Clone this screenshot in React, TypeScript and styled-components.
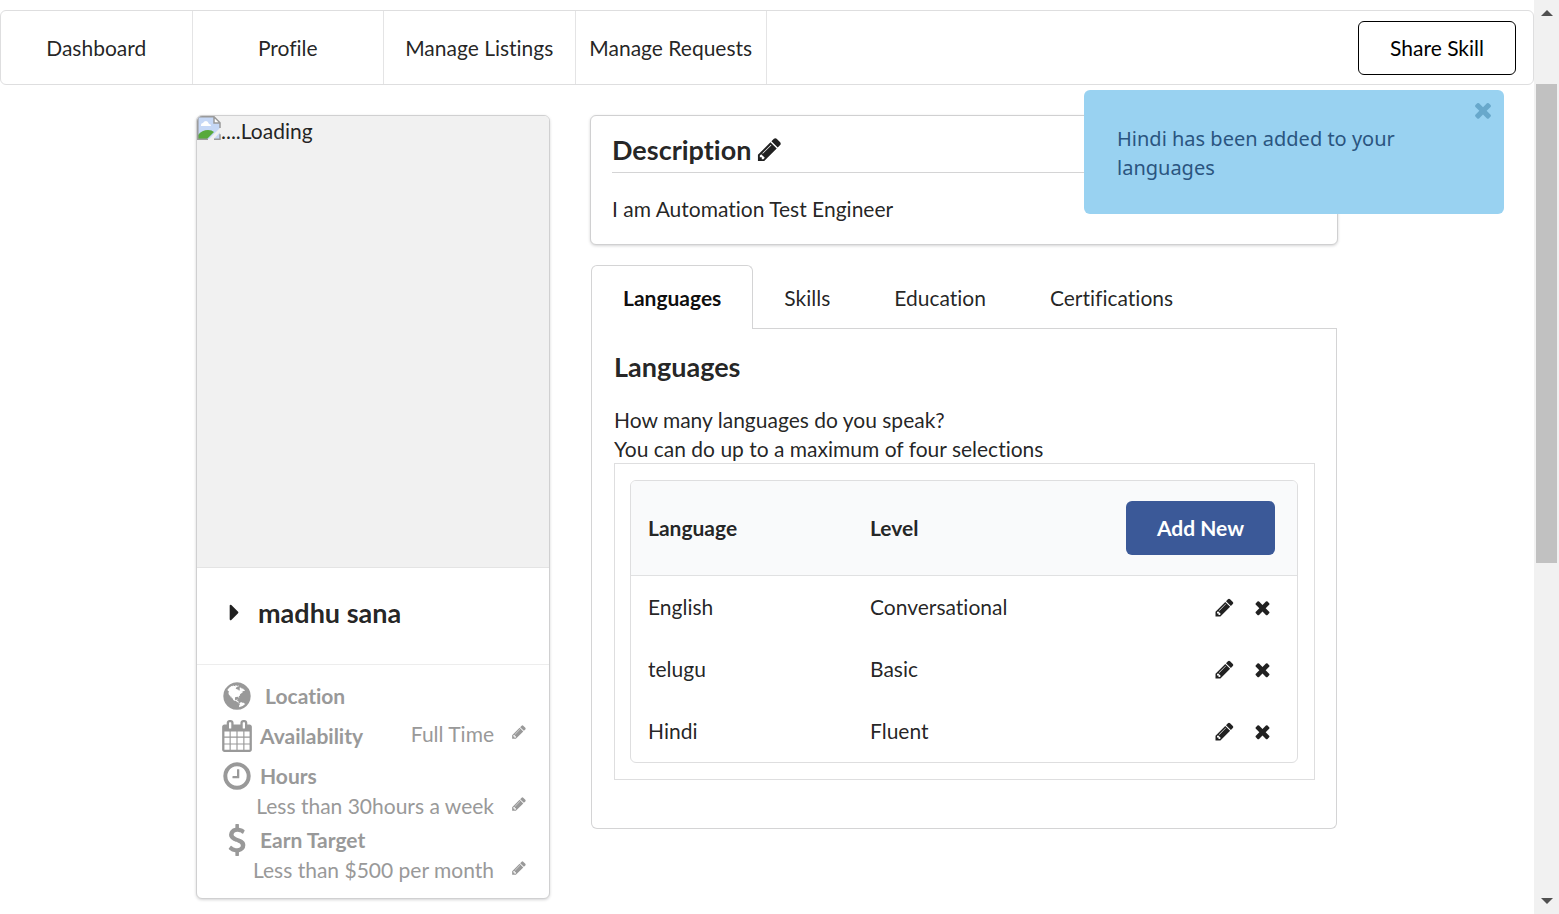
import React from 'react';
import styled, { createGlobalStyle } from 'styled-components';

const GlobalStyle = createGlobalStyle`
  *, *::before, *::after { box-sizing: border-box; }
  body { margin: 0; background: #fff; }
  body, button {
    font-family: Lato, 'Liberation Sans', sans-serif;
    font-size: 21px;
    line-height: 29px;
    font-variant-ligatures: none;
    color: rgba(0, 0, 0, 0.87);
  }
  h3, p, ul { margin: 0; padding: 0; }
`;

const ICONS = {
  pencil:
    'M491 1536l91-91-235-235-91 91v107h128v128h107zm523-928q0-22-22-22-10 0-17 7l-542 542q-7 7-7 17 0 22 22 22 10 0 17-7l542-542q7-7 7-17zm-54-192l416 416-832 832h-416v-416zm683 96q0 53-37 90l-166 166-416-416 166-165q36-38 90-38 53 0 91 38l235 234q37 39 37 91z',
  remove:
    'M1490 1322q0 40-28 68l-136 136q-28 28-68 28t-68-28l-294-294-294 294q-28 28-68 28t-68-28l-136-136q-28-28-28-68t28-68l294-294-294-294q-28-28-28-68t28-68l136-136q28-28 68-28t68 28l294 294 294-294q28-28 68-28t68 28l136 136q28 28 28 68t-28 68l-294 294 294 294q28 28 28 68z',
  caret:
    'M1152 896q0 26-19 45l-448 448q-19 19-45 19t-45-19-19-45v-896q0-26 19-45t45-19 45 19l448 448q19 19 19 45z',
  calendar:
    'M192 1664h288v-288h-288v288zm352 0h320v-288h-320v288zm-352-352h288v-320h-288v320zm352 0h320v-320h-320v320zm-352-384h288v-288h-288v288zm736 736h320v-288h-320v288zm-384-736h320v-288h-320v288zm768 736h288v-288h-288v288zm-384-352h320v-320h-320v320zm-352-864v-288q0-13-9.5-22.5t-22.5-9.5h-64q-13 0-22.5 9.5t-9.5 22.5v288q0 13 9.5 22.5t22.5 9.5h64q13 0 22.5-9.5t9.5-22.5zm736 864h288v-320h-288v320zm-384-384h320v-288h-320v288zm384 0h288v-288h-288v288zm32-480v-288q0-13-9.5-22.5t-22.5-9.5h-64q-13 0-22.5 9.5t-9.5 22.5v288q0 13 9.5 22.5t22.5 9.5h64q13 0 22.5-9.5t9.5-22.5zm384-64v1280q0 52-38 90t-90 38h-1408q-52 0-90-38t-38-90v-1280q0-52 38-90t90-38h128v-96q0-66 47-113t113-47h64q66 0 113 47t47 113v96h384v-96q0-66 47-113t113-47h64q66 0 113 47t47 113v96h128q52 0 90 38t38 90z',
  clock:
    'M1024 544v448q0 14-9 23t-23 9h-320q-14 0-23-9t-9-23v-64q0-14 9-23t23-9h224v-352q0-14 9-23t23-9h64q14 0 23 9t9 23zm416 352q0-148-73-273t-198-198-273-73-273 73-198 198-73 273 73 273 198 198 273 73 273-73 198-198 73-273zm224 0q0 209-103 385.5t-279.5 279.5-385.5 103-385.5-103-279.5-279.5-103-385.5 103-385.5 279.5-279.5 385.5-103 385.5 103 279.5 279.5 103 385.5z',
  dollar:
    'M1362 1185q0 153-99.5 263.5t-258.5 136.5v175q0 14-9 23t-23 9h-135q-13 0-22.5-9.5t-9.5-22.5v-175q-66-9-127.5-31t-101.5-44.5-74-48-46.5-37.5-17.5-18q-17-21-2-41l103-135q7-10 23-12 15-2 24 9l2 2q113 99 243 125 37 8 74 8 81 0 142.5-43t61.5-122q0-28-15-53t-33.5-42-58.5-37.5-66-32-80-32.5q-39-16-61.5-25t-61.5-26.5-62.5-31-56.5-35.5-53.5-42.5-43.5-49-35.5-58-21-66.5-8.5-78q0-138 98-242t255-134v-180q0-13 9.5-22.5t22.5-9.5h135q14 0 23 9t9 23v176q57 6 110.5 23t87 33.5 63.5 37.5 39 29 15 14q17 18 5 38l-81 146q-8 15-23 16-14 3-27-7-3-3-14.5-12t-39-26.5-58.5-32-74.5-26-85.5-11.5q-95 0-155 43t-60 111q0 26 8.5 48t29.5 41.5 39.5 33 56 31 60.5 27 70 27.5q53 20 81 31.5t76 35 75.5 42.5 62 50 53 63.5 31.5 76.5 13 94z',
  globe:
    'M896 128q209 0 385.5 103t279.5 279.5 103 385.5-103 385.5-279.5 279.5-385.5 103-385.5-103-279.5-279.5-103-385.5 103-385.5 279.5-279.5 385.5-103zm274 521q-2 1-9.5 9.5t-13.5 9.5q2 0 4.5-5t5-11 3.5-7q6-7 22-15 14-6 52-12 34-8 51 11-2-2 9.5-13t14.5-12q3-2 15-4.5t15-7.5l2-22q-12 1-17.5-7t-6.5-21q0 2-6 8 0-7-4.5-8t-11.5 1-9 1q-10-3-15-7.5t-8-16.5-4-15q-2-5-9.5-11t-9.5-10q-1-2-2.5-5.5t-3-6.5-4-5.5-5.5-2.5-7 5-7.5 10-4.5 5q-3-2-6-1.5t-4.5 1-4.5 3-5 3.5q-3 2-8.5 3t-8.5 2q15-5-1-11-10-4-16-3 9-4 7.5-12t-8.5-14h5q-1-4-8.5-8.5t-17.5-8.5-13-6q-8-5-34-9.5t-33-.5q-5 6-4.5 10.5t4 14 3.5 12.5q1 6-5.5 13t-6.5 12q0 7 14 15.5t10 21.5q-3 8-16 16t-16 12q-5 8-1.5 18.5t10.5 16.5q2 2 1.5 4t-3.5 4.5-5.5 4-6.5 3.5l-3 2q-11 5-20.5-6t-13.5-26q-7-25-16-30-23-8-29 1-5-13-41-26-25-9-58-4 6-1 0-15-7-15-19-12 3-6 4-17.5t1-13.5q3-13 12-23 1-1 7-8.5t9.5-13.5.5-6q35 4 50-11 5-5 11.5-17t10.5-17q9-6 14-5.5t14.5 5.5 14.5 5q14 1 15.5-11t-7.5-20q12 1 3-17-4-7-8-9-12-4-27 5-8 4 2 8-1-1-9.5 10.5t-16.5 17.5-16-5q-1-1-5.5-13.5t-9.5-13.5q-8 0-16 15 3-8-11-15t-24-8q19-12-8-27-7-4-20.5-5t-19.5 4q-5 7-5.5 11.5t5 8 10.5 5.5 11.5 4 8.5 3q14 10 8 14-2 1-8.5 3.5t-11.5 4.5-6 4q-3 4 0 14t-2 14q-5-5-9-17.5t-7-16.5q7 9-25 6l-10-1q-4 0-16 2t-20.5 1-13.5-8q-4-8 0-20 1-4 4-2-4-3-11-9.5t-10-8.5q-46 15-94 41 6 1 12-1 5-2 13-6.5t10-5.5q34-14 42-7l5-5q14 16 20 25-7-4-30-1-20 6-22 12 7 12 5 18-4-3-11.5-10t-14.5-11-15-5q-16 0-22 1-146 80-235 222 7 7 12 8 4 1 5 9t2.5 11 11.5-3q9 8 3 19 1-1 44 27 19 17 21 21 3 11-10 18-1-2-9-9t-9-4q-3 5 .5 18.5t10.5 12.5q-7 0-9.5 16t-2.5 35.5-1 23.5l2 1q-3 12 5.5 34.5t21.5 19.5q-13 3 20 43 6 8 8 9 3 2 12 7.5t15 10 10 10.5q4 5 10 22.5t14 23.5q-2 6 9.5 20t10.5 23q-1 0-2.5 1t-2.5 1q3 7 15.5 14t15.5 13q1 3 2 10t3 11 8 2q2-20-24-62-15-25-17-29-3-5-5.5-15.5t-4.5-14.5q2 0 6 1.5t8.5 3.5 7.5 4 2 3q-3 7 2 17.5t12 18.5 17 19 12 13q6 6 14 19.5t0 13.5q9 0 20 10t17 20q5 8 8 26t5 24q2 7 8.5 13.5t12.5 9.5l16 8 13 7q5 2 18.5 10.5t21.5 11.5q10 4 16 4t14.5-2.5 13.5-3.5q15-2 29 15t21 21q36 19 55 11-2 1 .5 7.5t8 15.5 9 14.5 5.5 8.5q5 6 18 15t18 15q6-4 7-9-3 8 7 20t18 10q14-3 14-32-31 15-49-18 0-1-2.5-5.5t-4-8.5-2.5-8.5 0-7.5 5-3q9 0 10-3.5t-2-12.5-4-13q-1-8-11-20t-12-15q-5 9-16 8t-16-9q0 1-1.5 5.5t-1.5 6.5q-13 0-15-1 1-3 2.5-17.5t3.5-22.5q1-4 5.5-12t7.5-14.5 4-12.5-4.5-9.5-17.5-2.5q-19 1-26 20-1 3-3 10.5t-5 11.5-9 7q-7 3-24 2t-24-5q-13-8-22.5-29t-9.5-37q0-10 2.5-26.5t3-25-5.5-24.5q3-2 9-9.5t10-10.5q2-1 4.5-1.5t4.5 0 4-1.5 3-6q-1-1-4-3-3-3-4-3 7 3 28.5-1.5t27.5 1.5q15 11 22-2 0-1-2.5-9.5t-.5-13.5q5 27 29 9 3 3 15.5 5t17.5 5q3 2 7 5.5t5.5 4.5 5-.5 8.5-6.5q10 14 12 24 11 40 19 44 7 3 11 2t4.5-9.5 0-14-1.5-12.5l-1-8v-18l-1-8q-15-3-18.5-12t1.5-18.5 15-18.5q1-1 8-3.5t15.5-6.5 12.5-8q21-19 15-35 7 0 11-9-1 0-5-3t-7.5-5-4.5-2q9-5 2-16 5-3 7.5-11t7.5-10q9 12 21 2 7-8 1-16 5-7 20.5-10.5t18.5-9.5q7 2 8-2t1-12 3-12q4-5 15-9t13-5l17-11q3-4 0-4 18 2 31-11 10-11-6-20 3-6-3-9.5t-15-5.5q3-1 11.5-.5t10.5-1.5q15-10-7-16-17-5-43 12zm-163 877q206-36 351-189-3-3-12.5-4.5t-12.5-3.5q-18-7-24-8 1-7-2.5-13t-8-9-12.5-8-11-7q-2-2-7-6t-7-5.5-7.5-4.5-8.5-2-10 1l-3 1q-3 1-5.5 2.5t-5.5 3-4 3 0 2.5q-21-17-36-22-5-1-11-5.5t-10.5-7-10-1.5-11.5 7q-5 5-6 15t-2 13q-7-5 0-17.5t2-18.5q-3-6-10.5-4.5t-12 4.5-11.5 8.5-9 6.5-8.5 5.5-8.5 7.5q-3 4-6 12t-5 11q-2-4-11.5-6.5t-9.5-5.5q2 10 4 35t5 38q7 31-12 48-27 25-29 40-4 22 12 26 0 7-8 20.5t-7 21.5q0 6 2 16z',
};

type IconName = keyof typeof ICONS;

const IconSvg = styled.svg<{ $size: number }>`
  display: block;
  flex: none;
  width: ${(p) => p.$size}px;
  height: ${(p) => p.$size}px;
  fill: currentColor;
`;

const Icon = ({ name, size }: { name: IconName; size: number }) => (
  <IconSvg $size={size} viewBox="0 0 1792 1792" aria-hidden="true">
    <path d={ICONS[name]} />
  </IconSvg>
);

const Shell = styled.div`
  display: flex;
  align-items: stretch;
  min-height: 100vh;
`;

const Page = styled.div`
  position: relative;
  flex: 1;
  min-width: 0;
  padding: 10px 0 15px;
`;

const NavBar = styled.nav`
  display: flex;
  height: 75px;
  border: 1px solid #dededf;
  border-radius: 6px;
`;

const NavLink = styled.a`
  flex: 0 0 12.5%;
  display: flex;
  align-items: center;
  justify-content: center;
  border-right: 1px solid #e4e4e5;
  white-space: nowrap;
  color: rgba(0, 0, 0, 0.87);
  text-decoration: none;
`;

const ShareButton = styled.button`
  align-self: center;
  height: 54px;
  margin-left: auto;
  margin-right: 17px;
  padding: 0 31px;
  background: #fff;
  color: #000;
  border: 1px solid #000;
  border-radius: 6px;
`;

const Container = styled.main`
  display: grid;
  grid-template-columns: 354fr 748fr;
  gap: 40px;
  align-items: start;
  max-width: 1142px;
  margin: 30px auto 0;
`;

const Card = styled.section`
  border: 1px solid #d0d0d1;
  border-radius: 6px;
  box-shadow: 0 1px 3px #d4d4d5;
  background: #fff;
  overflow: hidden;
`;

const Photo = styled.div`
  display: flex;
  align-items: flex-start;
  height: 451px;
  background: #f1f1f1;
`;

const NameRow = styled.div`
  display: flex;
  align-items: center;
  gap: 10px;
  height: 97px;
  padding: 0 0 7px 24px;
  border-top: 1px solid #e4e4e4;
`;

const Heading = styled.h3`
  font-size: 27px;
  line-height: 35px;
  font-weight: 700;
`;

const Facts = styled.ul`
  list-style: none;
  padding: 11px 22px 14px 24px;
  border-top: 1px solid #ededed;
  color: #999;
`;

const FactLine = styled.div`
  display: flex;
  align-items: center;
  gap: 7px;
  height: 40px;

  strong { flex: 1; padding-bottom: 2px; font-weight: 700; }
`;

const FactValue = styled.div`
  display: flex;
  align-items: flex-start;
  justify-content: flex-end;
  gap: 17px;
  padding-bottom: 4px;
  line-height: 20px;
`;

const IconButton = styled.button`
  display: inline-flex;
  padding: 0;
  border: 0;
  background: none;
  color: inherit;
  vertical-align: middle;
`;

const MainColumn = styled.div`
  display: flex;
  flex-direction: column;
  gap: 20px;
  min-width: 0;
`;

const DescriptionCard = styled(Card)`
  padding: 16px 21px 21px;
`;

const DescriptionTitle = styled.div`
  display: flex;
  align-items: center;
  gap: 5px;
  padding-bottom: 5px;
  margin-bottom: 21px;
  border-bottom: 1px solid #d4d4d5;
`;

const Tabbed = styled.section`
  margin: 0 1px;
`;

const TabList = styled.div`
  display: flex;
`;

const Tab = styled.button<{ $active?: boolean }>`
  height: 64px;
  padding: ${(p) => (p.$active ? '0 31px' : '0 32px')};
  background: #fff;
  border-style: solid;
  border-color: ${(p) => (p.$active ? '#d4d4d5 #d4d4d5 #fff' : 'transparent transparent #d4d4d5')};
  border-width: ${(p) => (p.$active ? '1px 1px 0' : '1px 0')};
  border-radius: ${(p) => (p.$active ? '6px 6px 0 0' : '0')};
  font-weight: ${(p) => (p.$active ? 700 : 400)};
  color: ${(p) => (p.$active ? 'rgba(0,0,0,.95)' : 'rgba(0,0,0,.87)')};

  &:nth-child(2) { padding-left: 31px; }
`;

const TabRule = styled.div`
  flex: 1;
  border-bottom: 1px solid #d4d4d5;
`;

const TabPanel = styled.div`
  padding: 20px 21px 48px 22px;
  border: 1px solid #d4d4d5;
  border-top: 0;
  border-radius: 0 0 6px 6px;

  p { margin-top: 21px; }
`;

const TableFrame = styled.div`
  padding: 16px 16px 16px 15px;
  border: 1px solid #dededf;
`;

const Table = styled.table`
  width: 100%;
  table-layout: fixed;
  border: 1px solid #dededf;
  border-radius: 6px;
  border-spacing: 0;
  overflow: hidden;

  th, td { padding: 0 17px 2px; text-align: left; }
  th { height: 95px; background: #f9fafb; border-bottom: 1px solid #e0e1e2; font-weight: 700; }
  td { height: 62px; }
  th:last-child, td:last-child { padding: 0 22px 0 0; text-align: right; }
`;

const AddButton = styled.button`
  height: 54px;
  padding: 0 31px 1px;
  border: 0;
  border-radius: 6px;
  background: #3b5998;
  color: #fff;
  font-weight: 700;
`;

const RowActions = styled.div`
  display: flex;
  justify-content: flex-end;
  gap: 17px;
  padding-right: 2px;
`;

const Toast = styled.div`
  position: absolute;
  top: 90px;
  right: 30px;
  width: 420px;
  padding: 34px 50px 32px 33px;
  border-radius: 6px;
  background: #99d2f1;
  color: #2a5580;
  font-family: 'Noto Sans', 'Open Sans', sans-serif;
  font-size: 20px;
`;

const ToastClose = styled(IconButton)`
  position: absolute;
  top: 8px;
  right: 9px;
  color: #68a8cb;
`;

const ScrollTrack = styled.aside`
  flex: none;
  display: flex;
  flex-direction: column;
  justify-content: space-between;
  align-items: center;
  width: 25px;
  height: 100vh;
  padding: 10px 2px 10px;
  background: #f1f1f1;
`;

const ScrollSpace = styled.div<{ $grow: number }>`
  flex: ${(p) => p.$grow};
`;

const ScrollThumb = styled.div`
  flex: 479;
  width: 100%;
  background: #c1c1c1;
`;

const ArrowSvg = styled.svg`
  display: block;
  width: 12px;
  height: 6px;
  fill: #505050;
`;

const BrokenImage = () => (
  <svg width="24" height="24" viewBox="0 0 24 24" aria-hidden="true">
    <path d="M1 1h16l6 6v16H1z" fill="#c6d8f6" />
    <path d="M4 9q0-2 2-2 1-2 3-2t3 3q2 0 2 2H4z" fill="#fff" />
    <path d="M1 23v-4q4-5 10-5 4 0 6 2l-7 7z" fill="#57a93c" />
    <path d="M24 11v4l-8 9h-5z" fill="#f1f1f1" />
    <path d="M17 1v6h6z" fill="#fff" />
    <path d="M11 23.200H.8V.8H17l6 6V12M17 1v6h6M17 23.200h6v-5" fill="none" stroke="#9a9a9a" strokeWidth="1.500" />
  </svg>
);

const EditButton = ({ label, size }: { label: string; size: number }) => (
  <IconButton type="button" aria-label={label}>
    <Icon name="pencil" size={size} />
  </IconButton>
);

const NAV = ['Dashboard', 'Profile', 'Manage Listings', 'Manage Requests'];
const TABS = ['Languages', 'Skills', 'Education', 'Certifications'];
const LANGUAGES = [
  { name: 'English', level: 'Conversational' },
  { name: 'telugu', level: 'Basic' },
  { name: 'Hindi', level: 'Fluent' },
];

export default function App() {
  return (
    <Shell>
      <GlobalStyle />
      <Page>
        <NavBar>
          {NAV.map((item) => (
            <NavLink key={item} href="#">{item}</NavLink>
          ))}
          <ShareButton type="button">Share Skill</ShareButton>
        </NavBar>

        <Container>
          <Card>
            <Photo>
              <BrokenImage />
              <span>....Loading</span>
            </Photo>
            <NameRow>
              <Icon name="caret" size={27} />
              <Heading>madhu sana</Heading>
            </NameRow>
            <Facts>
              <li>
                <FactLine>
                  <Icon name="globe" size={32} />
                  <strong>&nbsp;Location</strong>
                </FactLine>
              </li>
              <li>
                <FactLine>
                  <Icon name="calendar" size={32} />
                  <strong>Availability</strong>
                  <FactValue>
                    Full Time
                    <EditButton label="Edit availability" size={16} />
                  </FactValue>
                </FactLine>
              </li>
              <li>
                <FactLine>
                  <Icon name="clock" size={32} />
                  <strong>Hours</strong>
                </FactLine>
                <FactValue>
                  Less than 30hours a week
                  <EditButton label="Edit hours" size={16} />
                </FactValue>
              </li>
              <li>
                <FactLine>
                  <Icon name="dollar" size={32} />
                  <strong>Earn Target</strong>
                </FactLine>
                <FactValue>
                  Less than $500 per month
                  <EditButton label="Edit earn target" size={16} />
                </FactValue>
              </li>
            </Facts>
          </Card>

          <MainColumn>
            <DescriptionCard>
              <DescriptionTitle>
                <Heading>Description</Heading>
                <EditButton label="Edit description" size={27} />
              </DescriptionTitle>
              <p>I am Automation Test Engineer</p>
            </DescriptionCard>

            <Tabbed>
              <TabList role="tablist">
                {TABS.map((tab, i) => (
                  <Tab key={tab} type="button" role="tab" aria-selected={i === 0} $active={i === 0}>
                    {tab}
                  </Tab>
                ))}
                <TabRule />
              </TabList>
              <TabPanel role="tabpanel">
                <Heading>Languages</Heading>
                <p>
                  How many languages do you speak?
                  <br />
                  You can do up to a maximum of four selections
                </p>
                <TableFrame>
                  <Table>
                    <thead>
                      <tr>
                        <th scope="col">Language</th>
                        <th scope="col">Level</th>
                        <th scope="col">
                          <AddButton type="button">Add New</AddButton>
                        </th>
                      </tr>
                    </thead>
                    <tbody>
                      {LANGUAGES.map(({ name, level }) => (
                        <tr key={name}>
                          <td>{name}</td>
                          <td>{level}</td>
                          <td>
                            <RowActions>
                              <EditButton label={`Edit ${name}`} size={21} />
                              <IconButton type="button" aria-label={`Remove ${name}`}>
                                <Icon name="remove" size={21} />
                              </IconButton>
                            </RowActions>
                          </td>
                        </tr>
                      ))}
                    </tbody>
                  </Table>
                </TableFrame>
              </TabPanel>
            </Tabbed>
          </MainColumn>
        </Container>

        <Toast role="status">
          Hindi has been added to your languages
          <ToastClose type="button" aria-label="Close">
            <Icon name="remove" size={24} />
          </ToastClose>
        </Toast>
      </Page>

      <ScrollTrack aria-hidden="true">
        <ArrowSvg viewBox="0 0 12 6"><path d="M0 6l6-6 6 6z" /></ArrowSvg>
        <ScrollSpace $grow={68} />
        <ScrollThumb />
        <ScrollSpace $grow={335} />
        <ArrowSvg viewBox="0 0 12 6"><path d="M0 0l6 6 6-6z" /></ArrowSvg>
      </ScrollTrack>
    </Shell>
  );
}
